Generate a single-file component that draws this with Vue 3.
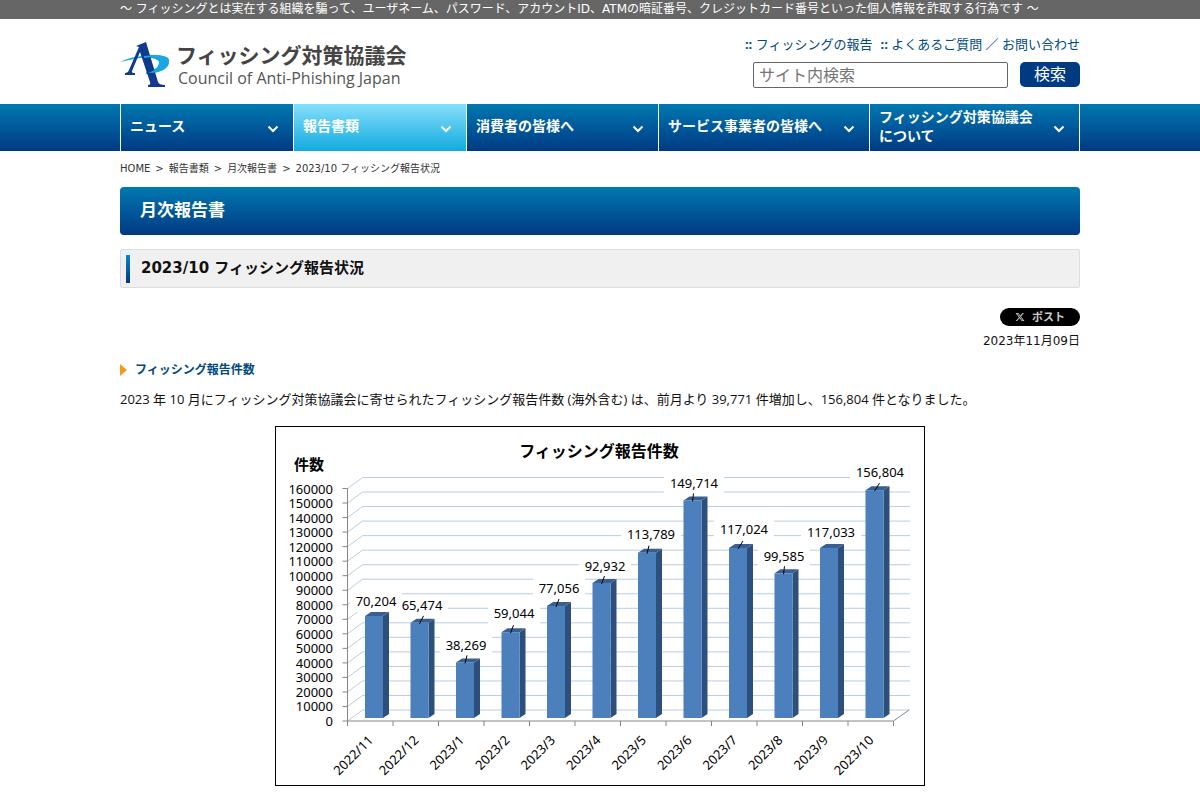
<script setup>
import { ref } from 'vue'

const keyword = ref('')

const navItems = [
  { label: 'ニュース' },
  { label: '報告書類', active: true },
  { label: '消費者の皆様へ' },
  { label: 'サービス事業者の皆様へ' },
  { label: 'フィッシング対策協議会について' },
]

const reports = [
  { month: '2022/11', count: 70204, lx: 101, ly: 175 },
  { month: '2022/12', count: 65474, lx: 147, ly: 179, lean: 4 },
  { month: '2023/1', count: 38269, lx: 191, ly: 219, lean: 2 },
  { month: '2023/2', count: 59044, lx: 239, ly: 187, lean: 3 },
  { month: '2023/3', count: 77056, lx: 284, ly: 162, lean: 3 },
  { month: '2023/4', count: 92932, lx: 330, ly: 140, lean: 3 },
  { month: '2023/5', count: 113789, lx: 376, ly: 108, lean: 2 },
  { month: '2023/6', count: 149714, lx: 419, ly: 57, lean: 1 },
  { month: '2023/7', count: 117024, lx: 469, ly: 103, lean: 5 },
  { month: '2023/8', count: 99585, lx: 509, ly: 130, lean: 1 },
  { month: '2023/9', count: 117033, lx: 556, ly: 106 },
  { month: '2023/10', count: 156804, lx: 605, ly: 46, lean: 5 },
]

const plot = { left: 72.5, right: 618.5, top: 62.5, bottom: 295, dx: 15, dy: 11 }
const plotHeight = plot.bottom - plot.top
const step = (plot.right - plot.left) / reports.length
const base = 292

const ticks = Array.from({ length: 17 }, (_, i) => ({
  value: i * 10000,
  y: plot.bottom - (plotHeight * i) / 16,
}))

const bars = reports.map((r, i) => {
  const x = plot.left + step * i + 17.5
  const top = base - (plotHeight * r.count) / 160000
  const text = r.count.toLocaleString('en-US')
  return { ...r, x, top, text, half: text.length * 4 + 2 }
})
</script>

<template>
  <div class="page">
    <div class="notice">
      <p class="wrap">〜 フィッシングとは実在する組織を騙って、ユーザネーム、パスワード、アカウントID、ATMの暗証番号、クレジットカード番号といった個人情報を詐取する行為です 〜</p>
    </div>

    <header class="wrap header">
      <a class="logo" href="#">
        <svg class="mark" viewBox="0 0 50 46" aria-hidden="true">
          <path d="M0 20 C10 15 24 13 34 13 C44 13 50 15 49 20 C48 27 39 31 26 32 L26 30 C36 28 40 24 39 20 C38 16 28 15 20 16 C12 17 6 19 0 20Z" fill="#1ba6e3" />
          <path d="M16 4 L26 0 L38 40 Q39 43 45 43 L45 45 L28 45 L28 43 Q31 43 30 40 L20 10 L12 29 Q11 31 15 31 L15 33 L5 33 L5 31 Q8 31 9 28 L19 5 Z" fill="#103a8c" />
          <path d="M24 16 C34 14 40 17 39 21 C38 26 34 29 28 31 C42 31 49 26 49 20 C50 14 40 12 24 14Z" fill="#1ba6e3" />
        </svg>
        <span class="logo-text">
          <span class="logo-name">フィッシング対策協議会</span>
          <span class="logo-sub">Council of Anti-Phishing Japan</span>
        </span>
      </a>
      <div class="tools">
        <div class="links">
          <a href="#"><b>::</b> フィッシングの報告</a>
          <a href="#"><b>::</b> よくあるご質問 ／ お問い合わせ</a>
        </div>
        <form class="search" @submit.prevent>
          <input v-model="keyword" type="text" placeholder="サイト内検索" aria-label="サイト内検索" />
          <button type="submit">検索</button>
        </form>
      </div>
    </header>

    <nav class="nav">
      <div class="wrap nav-grid">
        <a v-for="item in navItems" :key="item.label" href="#" class="nav-item" :class="{ active: item.active }">
          <span>{{ item.label }}</span>
          <svg class="chevron" viewBox="0 0 12 8" aria-hidden="true">
            <path d="M1.500 1.500 L6 6 L10.500 1.500" fill="none" stroke="currentColor" stroke-width="2" />
          </svg>
        </a>
      </div>
    </nav>

    <main class="wrap">
      <div class="crumbs">
        <a href="#">HOME</a><span>&gt;</span><a href="#">報告書類</a><span>&gt;</span><a href="#">月次報告書</a><span>&gt;</span><span>2023/10 フィッシング報告状況</span>
      </div>

      <h1>月次報告書</h1>
      <h2>2023/10 フィッシング報告状況</h2>

      <div class="meta">
        <button type="button" class="post">
          <svg viewBox="0 0 24 24" aria-hidden="true">
            <path fill="currentColor" d="M18.244 2.250h3.308l-7.227 8.260 8.502 11.240H16.170l-5.214-6.817L4.990 21.750H1.680l7.730-8.835L1.254 2.250H8.080l4.713 6.231zm-1.161 17.520h1.833L7.084 4.126H5.117z" />
          </svg>
          ポスト
        </button>
        <time datetime="2023-11-09">2023年11月09日</time>
      </div>

      <h3>フィッシング報告件数</h3>
      <p class="summary">2023 年 10 月にフィッシング対策協議会に寄せられたフィッシング報告件数 (海外含む) は、前月より 39,771 件増加し、156,804 件となりました。</p>

      <figure class="chart">
        <svg viewBox="0 0 648 358" role="img" aria-label="フィッシング報告件数">
          <g transform="translate(-1 -1)">
            <text class="chart-title" x="324" y="31">フィッシング報告件数</text>
            <text class="unit" x="34" y="44">件数</text>

            <g class="grid">
              <polyline
                v-for="t in ticks"
                :key="t.value"
                :points="`${plot.left},${t.y} ${plot.left + plot.dx},${t.y - plot.dy} 635,${t.y - plot.dy}`"
              />
            </g>

            <rect v-for="b in bars" :key="b.month" :x="b.lx - b.half" :y="b.ly - 10" :width="b.half * 2" height="21" fill="#fff" />

            <g class="axis">
              <path :d="`M${plot.left} ${plot.top}V${plot.bottom}H${plot.right}l15.500 -11`" />
              <path v-for="t in ticks" :key="t.value" :d="`M${plot.left - 5} ${t.y}h5`" />
              <path v-for="n in 13" :key="n" :d="`M${plot.left + step * (n - 1)} ${plot.bottom}v5`" />
            </g>

            <text v-for="t in ticks" :key="t.value" class="tick" x="58" :y="t.y + 5">{{ t.value }}</text>

            <g v-for="b in bars" :key="b.month">
              <path :d="`M${b.x + 18} ${b.top}l6 -4V${base - 4}l-6 4z`" fill="#2c4f7b" />
              <path :d="`M${b.x} ${b.top}l6 -4h18l-6 4z`" fill="#385f90" />
              <rect :x="b.x" :y="b.top" width="18" :height="base - b.top" fill="#4b80bd" />
              <path v-if="b.lean" :d="`M${b.x + 9} ${b.top + 1}l${b.lean} -8`" stroke="#000" />
              <text class="value" :x="b.lx" :y="b.ly + 5">{{ b.text }}</text>
              <text class="month" :transform="`translate(${b.x + 9} 315) rotate(-45)`">{{ b.month }}</text>
            </g>
          </g>
        </svg>
      </figure>
    </main>
  </div>
</template>

<style>
body {
  margin: 0;
  background: #fff;
}
</style>

<style scoped>
.page {
  font-family: "Open Sans", "Noto Sans CJK JP", sans-serif;
  font-size: 13px;
  line-height: 20px;
  color: #111;
}
.page * {
  box-sizing: border-box;
}
.wrap {
  max-width: 960px;
  margin: 0 auto;
}
a {
  color: inherit;
  text-decoration: none;
}
.notice {
  background: #666;
  color: #fff;
}
.notice p {
  font-family: "DejaVu Sans", "Noto Sans CJK JP", sans-serif;
  font-size: 12px;
  line-height: 18px;
  padding-bottom: 1px;
  white-space: nowrap;
}
.header {
  display: flex;
  justify-content: space-between;
  align-items: flex-start;
  height: 85px;
  padding-top: 15px;
}
.logo {
  display: flex;
  gap: 6px;
  padding-top: 8px;
}
.mark {
  width: 50px;
  height: 46px;
}
.logo-text {
  display: flex;
  flex-direction: column;
  color: #444;
}
.logo-name {
  font-size: 21px;
  line-height: 26px;
  font-weight: 700;
}
.logo-sub {
  font-family: "Open Sans", sans-serif;
  font-size: 16px;
  line-height: 20px;
  color: #555;
  padding-left: 2px;
}
.tools {
  display: flex;
  flex-direction: column;
  gap: 8px;
}
.links {
  display: flex;
  justify-content: flex-end;
  gap: 8px;
  color: #004a80;
}
.search {
  display: flex;
  justify-content: flex-end;
  gap: 12px;
}
.search input {
  width: 255px;
  height: 26px;
  padding: 0 5px;
  border: 1px solid #666;
  border-radius: 2px;
  font-family: inherit;
  font-size: 16px;
}
.search input::placeholder {
  color: #757575;
}
.search button {
  width: 60px;
  height: 25px;
  padding: 0;
  border: 0;
  border-radius: 5px;
  background: #003b82;
  color: #fff;
  font-family: inherit;
  font-size: 16px;
  line-height: 25px;
}
.nav,
h1 {
  background: linear-gradient(#0078b0, #003a84);
  color: #fff;
}
.nav-grid {
  display: grid;
  grid-template-columns: 173fr 173fr 192fr 211fr 210fr;
  border-right: 1px solid #fff;
}
.nav-item {
  display: flex;
  align-items: center;
  justify-content: space-between;
  height: 47px;
  padding: 0 14px 4px 9px;
  border-left: 1px solid #fff;
  font-size: 14px;
  line-height: 19px;
  font-weight: 700;
}
.nav-item.active {
  background: linear-gradient(#86dffb, #12abe0);
}
.nav-item span {
  max-width: 156px;
}
.chevron {
  flex: none;
  width: 12px;
  height: 8px;
  margin-top: 7px;
}
.crumbs {
  display: flex;
  gap: 5px;
  padding: 9px 0;
  font-family: "DejaVu Sans", "Noto Sans CJK JP", sans-serif;
  font-size: 10px;
  line-height: 18px;
  color: #333;
}
h1 {
  margin: 0 0 14px;
  padding: 0 20px 2px;
  border-radius: 4px;
  font-size: 17px;
  line-height: 46px;
}
h2 {
  display: flex;
  align-items: center;
  gap: 11px;
  margin: 0 0 20px;
  padding: 4px 5px;
  border: 1px solid #ddd;
  border-radius: 2px;
  background: #f0f0f0;
  color: #111;
  font-family: "DejaVu Sans", "Noto Sans CJK JP", sans-serif;
  font-size: 15px;
  line-height: 29px;
}
h2::before {
  content: "";
  width: 4px;
  height: 28px;
  background: linear-gradient(#0b86c4, #003a80);
}
.meta {
  display: flex;
  flex-direction: column;
  align-items: flex-end;
  gap: 5px;
}
.meta time {
  font-family: "DejaVu Sans", "Noto Sans CJK JP", sans-serif;
  font-size: 12px;
}
.post {
  display: flex;
  align-items: center;
  justify-content: center;
  gap: 7px;
  width: 80px;
  height: 18px;
  padding: 0;
  border: 0;
  border-radius: 9px;
  background: #000;
  color: #ccc;
  font-family: inherit;
  font-size: 11px;
  line-height: 18px;
  font-weight: 700;
}
.post svg {
  width: 10px;
  height: 10px;
}
h3 {
  display: flex;
  align-items: center;
  gap: 8px;
  margin: 9px 0;
  color: #004a80;
  font-size: 12px;
  line-height: 20px;
}
h3::before {
  content: "";
  border-left: 7px solid #f09a1a;
  border-top: 6px solid transparent;
  border-bottom: 6px solid transparent;
}
.summary {
  margin: 0 0 17px;
}
.chart {
  max-width: 650px;
  margin: 0 auto;
  border: 1px solid #000;
}
.chart svg {
  display: block;
  width: 100%;
  font-family: "Noto Sans", "Noto Sans CJK JP", sans-serif;
  font-size: 13px;
}
.chart text {
  fill: #000;
}
.chart-title {
  font-size: 16px;
  font-weight: 700;
  text-anchor: middle;
}
.unit {
  font-size: 15px;
  font-weight: 700;
  text-anchor: middle;
}
.grid {
  fill: none;
  stroke: #b9cee2;
}
.axis {
  fill: none;
  stroke: #868686;
}
.tick,
.month {
  text-anchor: end;
}
.value {
  text-anchor: middle;
}
</style>
